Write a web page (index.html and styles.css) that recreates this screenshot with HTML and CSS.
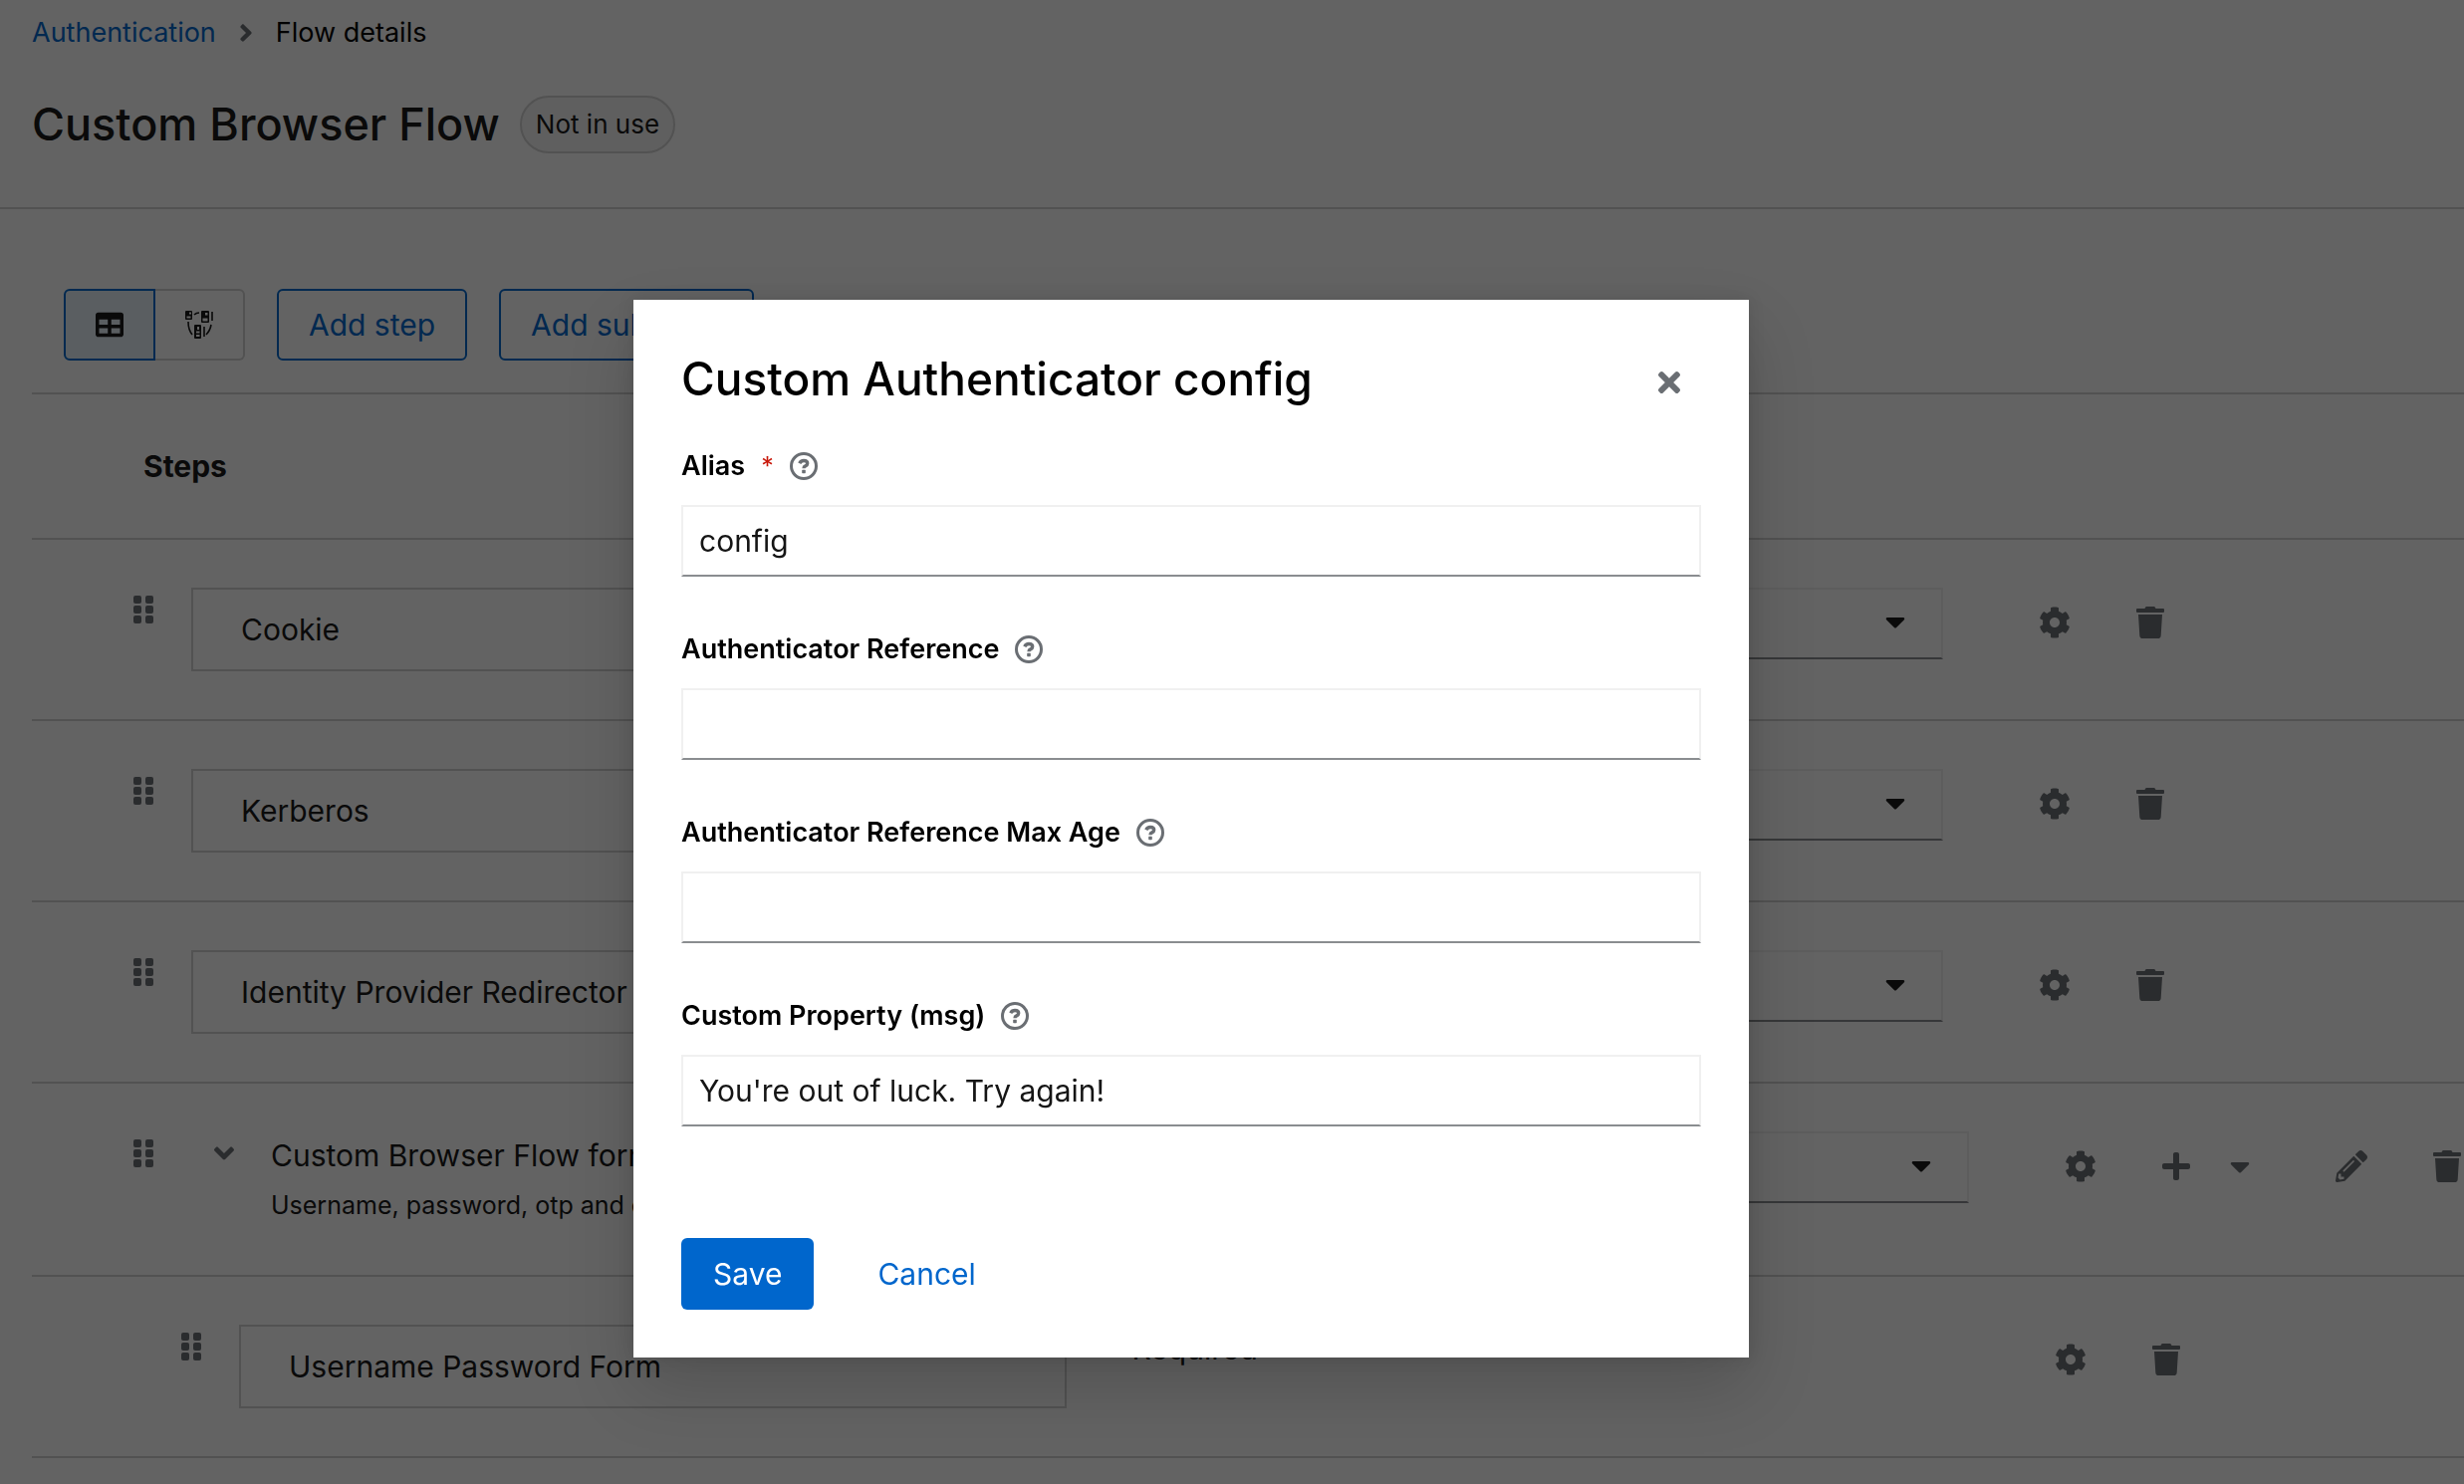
FILE: index.html
```html
<!DOCTYPE html>
<html lang="en">
<head>
<meta charset="utf-8">
<title>Flow details</title>
<link rel="stylesheet" href="styles.css">
</head>
<body>
<svg class="sprite" aria-hidden="true">
  <symbol id="cog" viewBox="0 0 512 512"><path d="M487.4 315.7l-42.6-24.6c4.3-23.2 4.3-47 0-70.2l42.6-24.6c4.9-2.8 7.1-8.6 5.5-14-11.1-35.6-30-67.8-54.7-94.6-3.8-4.1-10-5.1-14.8-2.3L380.8 110c-17.9-15.4-38.5-27.3-60.8-35.1V25.8c0-5.6-3.9-10.5-9.4-11.7-36.7-8.2-74.3-7.8-109.2 0-5.5 1.2-9.4 6.1-9.4 11.7V75c-22.2 7.9-42.8 19.8-60.8 35.1L88.7 85.5c-4.9-2.8-11-1.9-14.8 2.3-24.7 26.7-43.6 58.9-54.7 94.6-1.7 5.4.6 11.2 5.5 14L67.3 221c-4.3 23.2-4.3 47 0 70.2l-42.6 24.6c-4.9 2.8-7.1 8.6-5.5 14 11.1 35.6 30 67.8 54.7 94.6 3.8 4.1 10 5.1 14.8 2.3l42.6-24.6c17.9 15.4 38.5 27.3 60.8 35.1v49.2c0 5.6 3.9 10.5 9.4 11.7 36.7 8.2 74.3 7.8 109.2 0 5.5-1.2 9.4-6.1 9.4-11.7v-49.2c22.2-7.9 42.8-19.8 60.8-35.1l42.6 24.6c4.9 2.8 11 1.9 14.8-2.3 24.7-26.7 43.6-58.9 54.7-94.6 1.5-5.5-.7-11.3-5.6-14.1zM256 336c-44.1 0-80-35.9-80-80s35.9-80 80-80 80 35.9 80 80-35.9 80-80 80z"/></symbol>
  <symbol id="trash" viewBox="0 0 448 512"><path d="M432 32H312l-9.4-18.7A24 24 0 0 0 281.1 0H166.8a23.72 23.72 0 0 0-21.4 13.3L136 32H16A16 16 0 0 0 0 48v32a16 16 0 0 0 16 16h416a16 16 0 0 0 16-16V48a16 16 0 0 0-16-16zM32 128l21.2 339a48 48 0 0 0 47.9 45h245.8a48 48 0 0 0 47.9-45L416 128z"/></symbol>
  <symbol id="plus" viewBox="0 0 448 512"><path d="M416 208H272V64c0-17.67-14.33-32-32-32h-32c-17.67 0-32 14.33-32 32v144H32c-17.67 0-32 14.33-32 32v32c0 17.67 14.33 32 32 32h144v144c0 17.67 14.33 32 32 32h32c17.67 0 32-14.33 32-32V304h144c17.67 0 32-14.33 32-32v-32c0-17.67-14.33-32-32-32z"/></symbol>
  <symbol id="caret" viewBox="0 0 320 512"><path d="M31.3 192h257.3c17.8 0 26.7 21.5 14.1 34.1L174.1 354.8c-7.8 7.8-20.5 7.8-28.3 0L17.2 226.1C4.6 213.5 13.5 192 31.3 192z"/></symbol>
  <symbol id="pencil" viewBox="0 0 512 512"><path fill-rule="evenodd" d="M497.9 142.1l-46.1 46.1c-4.7 4.7-12.3 4.7-17 0l-111-111c-4.7-4.7-4.7-12.3 0-17l46.1-46.1c18.7-18.7 49.1-18.7 67.9 0l60.1 60.1c18.8 18.7 18.8 49.1 0 67.9zM284.2 99.8L21.6 362.4.4 483.9c-2.9 16.4 11.4 30.6 27.8 27.8l121.5-21.3 262.6-262.6c4.7-4.7 4.7-12.3 0-17l-111-111c-4.8-4.7-12.4-4.7-17.1 0zM124.1 339.9c-5.5-5.5-5.5-14.3 0-19.8l154-154c5.5-5.5 14.3-5.5 19.8 0s5.5 14.3 0 19.8l-154 154c-5.5 5.5-14.3 5.5-19.8 0zM88 424h48v36.3l-64.5 11.3-31.1-31.1L51.7 376H88v48z"/></symbol>
  <symbol id="times" viewBox="0 80 352 352"><path d="M242.72 256l100.07-100.07c12.28-12.28 12.28-32.19 0-44.48l-22.24-22.24c-12.28-12.28-32.19-12.28-44.48 0L176 189.28 75.93 89.21c-12.28-12.28-32.19-12.28-44.48 0L9.21 111.45c-12.28 12.28-12.28 32.19 0 44.48L109.28 256 9.21 356.07c-12.28 12.28-12.28 32.19 0 44.48l22.24 22.24c12.28 12.28 32.2 12.28 44.48 0L176 322.72l100.07 100.07c12.28 12.28 32.2 12.28 44.48 0l22.24-22.24c12.28-12.28 12.28-32.19 0-44.48L242.72 256z"/></symbol>
  <symbol id="table" viewBox="0 0 512 512"><path d="M464 32H48C21.49 32 0 53.49 0 80v352c0 26.51 21.49 48 48 48h416c26.51 0 48-21.49 48-48V80c0-26.51-21.49-48-48-48zM224 416H64v-96h160v96zm0-160H64v-96h160v96zm224 160H288v-96h160v96zm0-160H288v-96h160v96z"/></symbol>
  <symbol id="diagram" viewBox="0 0 28 28">
    <path fill-rule="evenodd" d="M1 0h5a1 1 0 0 1 1 1v7a1 1 0 0 1-1 1H1a1 1 0 0 1-1-1V1a1 1 0 0 1 1-1zM4 1.500h2v2H4zM1.500 5.500h4v2h-4zM17 0h6a1 1 0 0 1 1 1v10a1 1 0 0 1-1 1h-6a1 1 0 0 1-1-1V1a1 1 0 0 1 1-1zM20 2h2.500v2.500H20zM17.500 7.500h5v3h-5zM10 14h5a1 1 0 0 1 1 1v12a1 1 0 0 1-1 1h-5a1 1 0 0 1-1-1V15a1 1 0 0 1 1-1zM12 16h2v3h-2zM11 20.500h3.500v2H11zM11 24h3.500v2H11z"/>
    <path fill="none" stroke="currentColor" stroke-width="1.600" d="M27 1v9M19 16v10M9 4q2-2 5-2M3 11q0 8 4 13M26 14q-1 6-5 10"/>
  </symbol>
  <symbol id="grip" viewBox="0 0 20 28"><rect width="8" height="8" rx="2"/><rect x="12" width="8" height="8" rx="2"/><rect y="10" width="8" height="8" rx="2"/><rect x="12" y="10" width="8" height="8" rx="2"/><rect y="20" width="8" height="8" rx="2"/><rect x="12" y="20" width="8" height="8" rx="2"/></symbol>
  <symbol id="angle-right" viewBox="0 0 256 512"><path d="M224.300 273l-136 136c-9.400 9.400-24.600 9.400-33.900 0l-22.600-22.600c-9.400-9.400-9.400-24.600 0-33.900l96.400-96.400-96.400-96.400c-9.400-9.400-9.400-24.600 0-33.900L54.300 103c9.400-9.400 24.600-9.400 33.900 0l136 136c9.500 9.400 9.500 24.600.1 34z"/></symbol>
  <symbol id="angle-down" viewBox="0 0 320 512"><path d="M143 352.300L7 216.300c-9.400-9.400-9.400-24.600 0-33.900l22.600-22.600c9.400-9.400 24.600-9.400 33.900 0l96.400 96.400 96.400-96.400c9.400-9.400 24.600-9.400 33.900 0l22.600 22.600c9.400 9.400 9.400 24.600 0 33.900l-136 136c-9.200 9.400-24.400 9.400-33.800 0z"/></symbol>
  <symbol id="help" viewBox="0 0 28 28"><circle cx="14" cy="14" r="12.500" fill="none" stroke="currentColor" stroke-width="3"/><path fill="none" stroke="currentColor" stroke-width="3.400" d="M9.800 11.200q1.200-2.700 4.200-2.700 3.700 0 3.700 2.800 0 1.700-2 2.600-1.700.8-1.700 2.300"/><rect x="12.200" y="17.800" width="3.600" height="3.400" rx=".6"/></symbol>
</svg>

<div class="page">
  <header class="page-header">
    <nav class="breadcrumb" aria-label="Breadcrumb">
      <a href="#authentication">Authentication</a>
      <svg class="icon-angle"><use href="#angle-right"/></svg>
      <span>Flow details</span>
    </nav>
    <div class="title-row">
      <h1>Custom Browser Flow</h1>
      <span class="label">Not in use</span>
    </div>
  </header>

  <main class="content">
    <div class="toolbar">
      <div class="toggle-group">
        <button class="toggle selected" type="button" aria-label="Table view"><svg class="icon-toggle"><use href="#table"/></svg></button>
        <button class="toggle" type="button" aria-label="Diagram view"><svg class="icon-toggle"><use href="#diagram"/></svg></button>
      </div>
      <button class="btn secondary" type="button">Add step</button>
      <button class="btn secondary" type="button">Add sub-flow</button>
    </div>

    <h2 class="list-head">Steps</h2>
    <ul class="steps">
      <li class="step">
        <svg class="grip"><use href="#grip"/></svg>
        <div class="step-name"><div class="step-box">Cookie</div></div>
        <div class="requirement"><select aria-label="Cookie requirement"><option>Alternative</option><option>Required</option></select><svg class="caret"><use href="#caret"/></svg></div>
        <div class="actions">
          <button class="plain" type="button" aria-label="Settings"><svg class="icon"><use href="#cog"/></svg></button>
          <button class="plain" type="button" aria-label="Delete"><svg class="icon"><use href="#trash"/></svg></button>
        </div>
      </li>
      <li class="step">
        <svg class="grip"><use href="#grip"/></svg>
        <div class="step-name"><div class="step-box">Kerberos</div></div>
        <div class="requirement"><select aria-label="Kerberos requirement"><option>Disabled</option><option>Required</option></select><svg class="caret"><use href="#caret"/></svg></div>
        <div class="actions">
          <button class="plain" type="button" aria-label="Settings"><svg class="icon"><use href="#cog"/></svg></button>
          <button class="plain" type="button" aria-label="Delete"><svg class="icon"><use href="#trash"/></svg></button>
        </div>
      </li>
      <li class="step">
        <svg class="grip"><use href="#grip"/></svg>
        <div class="step-name"><div class="step-box">Identity Provider Redirector</div></div>
        <div class="requirement"><select aria-label="Identity Provider Redirector requirement"><option>Alternative</option><option>Required</option></select><svg class="caret"><use href="#caret"/></svg></div>
        <div class="actions">
          <button class="plain" type="button" aria-label="Settings"><svg class="icon"><use href="#cog"/></svg></button>
          <button class="plain" type="button" aria-label="Delete"><svg class="icon"><use href="#trash"/></svg></button>
        </div>
      </li>
      <li class="step flow">
        <svg class="grip"><use href="#grip"/></svg>
        <button class="expander" type="button" aria-label="Collapse"><svg class="icon-expand"><use href="#angle-down"/></svg></button>
        <div class="flow-title">Custom Browser Flow forms<small>Username, password, otp and other auth forms.</small></div>
        <div class="requirement"><select aria-label="Forms requirement"><option>Alternative</option><option>Required</option></select><svg class="caret"><use href="#caret"/></svg></div>
        <div class="actions">
          <button class="plain" type="button" aria-label="Settings"><svg class="icon"><use href="#cog"/></svg></button>
          <button class="plain" type="button" aria-label="Add"><svg class="icon"><use href="#plus"/></svg></button>
          <button class="plain narrow" type="button" aria-label="More add options"><svg class="icon"><use href="#caret"/></svg></button>
          <button class="plain" type="button" aria-label="Edit"><svg class="icon"><use href="#pencil"/></svg></button>
          <button class="plain" type="button" aria-label="Delete"><svg class="icon"><use href="#trash"/></svg></button>
        </div>
      </li>
      <li class="step nested">
        <svg class="grip"><use href="#grip"/></svg>
        <div class="step-name"><div class="step-box">Username Password Form</div></div>
        <div class="requirement">Required</div>
        <div class="actions">
          <button class="plain" type="button" aria-label="Settings"><svg class="icon"><use href="#cog"/></svg></button>
          <button class="plain" type="button" aria-label="Delete"><svg class="icon"><use href="#trash"/></svg></button>
        </div>
      </li>
    </ul>
  </main>
</div>

<div class="backdrop">
  <form class="modal" role="dialog" aria-labelledby="modal-title">
    <div class="modal-head">
      <h2 id="modal-title">Custom Authenticator config</h2>
      <button class="plain" type="button" aria-label="Close"><svg class="icon-close"><use href="#times"/></svg></button>
    </div>
    <div class="fields">
      <div class="field">
        <div class="field-label"><label for="alias">Alias</label><span class="required">*</span><button class="help" type="button" aria-label="Help for Alias"><svg><use href="#help"/></svg></button></div>
        <input id="alias" type="text" value="config">
      </div>
      <div class="field">
        <div class="field-label"><label for="reference">Authenticator Reference</label><button class="help" type="button" aria-label="Help for Authenticator Reference"><svg><use href="#help"/></svg></button></div>
        <input id="reference" type="text">
      </div>
      <div class="field">
        <div class="field-label"><label for="max-age">Authenticator Reference Max Age</label><button class="help" type="button" aria-label="Help for Max Age"><svg><use href="#help"/></svg></button></div>
        <input id="max-age" type="text">
      </div>
      <div class="field">
        <div class="field-label"><label for="msg">Custom Property (msg)</label><button class="help" type="button" aria-label="Help for Custom Property"><svg><use href="#help"/></svg></button></div>
        <input id="msg" type="text" value="You're out of luck. Try again!">
      </div>
    </div>
    <div class="modal-foot">
      <button class="btn primary" type="button">Save</button>
      <button class="btn link" type="button">Cancel</button>
    </div>
  </form>
</div>
</body>
</html>
```
FILE: styles.css
```css
* { box-sizing: border-box; }

body {
  margin: 0;
  overflow: hidden;
  background: #fff;
  color: #151515;
  font-family: Inter, "Liberation Sans", sans-serif;
  font-size: 30px;
  line-height: 48px;
}

h1, h2 { margin: 0; }
button, input, select { font: inherit; color: inherit; }
button { padding: 0; border: 0; background: none; }
svg { display: block; flex: none; fill: currentColor; }
.sprite { position: absolute; width: 0; height: 0; }

.page-header {
  padding: 12px 32px 52px;
  border-bottom: 2px solid #d2d2d2;
}

.breadcrumb {
  display: flex;
  align-items: center;
  gap: 20px;
  font-size: 27px;
  line-height: 42px;
  color: #000;
}

.breadcrumb a { color: #06c; text-decoration: none; }
.icon-angle { width: 20px; height: 28px; color: #6a6e73; }
.icon-expand { width: 24px; height: 32px; color: #6a6e73; }

.title-row {
  display: flex;
  align-items: center;
  gap: 20px;
  padding-top: 40px;
}

.title-row h1 { font-size: 45px; font-weight: 500; line-height: 62px; }

.label {
  padding: 0 14px;
  border: 2px solid #d2d2d2;
  border-radius: 30px;
  background: #f5f5f5;
  font-size: 26px;
  line-height: 54px;
}

.content { padding: 80px 0 0 32px; }

.toolbar {
  display: flex;
  gap: 32px;
  padding: 0 32px 32px;
  border-bottom: 2px solid #d2d2d2;
}

.toggle-group { display: flex; }

.toggle {
  display: grid;
  place-items: center;
  width: 90px;
  height: 72px;
  border: 2px solid #d2d2d2;
  border-left: 0;
  border-radius: 0 6px 6px 0;
}

.toggle.selected {
  width: 92px;
  border: 2px solid #06c;
  border-radius: 6px 0 0 6px;
  background: #e7f1fa;
}

.icon-toggle { width: 28px; height: 28px; }

.btn {
  height: 72px;
  padding: 0 32px;
  border-radius: 6px;
  line-height: 48px;
}

.btn.secondary { border: 2px solid #06c; padding: 0 30px; color: #06c; }
.btn.primary { background: #06c; color: #fff; }
.btn.link { color: #06c; }

.list-head {
  padding: 48px 112px;
  border-bottom: 2px solid #d2d2d2;
  font-size: 30px;
  font-weight: 700;
}

.steps { margin: 0; padding: 0; list-style: none; }

.step {
  display: flex;
  align-items: flex-start;
  padding: 48px 0 48px 102px;
  border-bottom: 2px solid #d2d2d2;
}

.step.nested { padding-left: 150px; }

.grip { width: 20px; height: 28px; margin-top: 8px; color: #6a6e73; }

.step-name { flex: 1; margin: 0 66px 0 38px; }
.step-box { padding: 16px 48px; border: 2px solid #d2d2d2; }

.expander { margin: 6px 35px 0 59px; }

.flow-title { flex: 1; margin-right: 66px; }
.flow-title small { display: block; padding-top: 4px; font-size: 25px; line-height: 44px; }

.requirement { position: relative; flex: 1; }

.requirement select {
  display: block;
  width: 100%;
  height: 72px;
  padding: 0 16px;
  border: 2px solid #f0f0f0;
  border-bottom-color: #8a8d90;
  border-radius: 0;
  background: #fff;
  appearance: none;
}

.caret {
  position: absolute;
  top: 18px;
  right: 38px;
  width: 20px;
  height: 32px;
  pointer-events: none;
}

.actions { display: flex; flex: none; width: 523px; padding-left: 64px; }
.flow .actions { width: 497px; }
.nested .actions { width: 507px; }

.plain {
  display: grid;
  flex: none;
  place-items: center;
  width: 96px;
  height: 70px;
  color: #6a6e73;
}

.plain.narrow { width: 32px; margin-right: 48px; }
.icon { width: 32px; height: 32px; }
.narrow .icon { width: 20px; }

.backdrop {
  position: fixed;
  inset: 0;
  display: flex;
  align-items: flex-start;
  justify-content: center;
  padding: 301px 82px 0 0;
  background: rgba(3, 3, 3, .62);
}

.modal {
  width: 1120px;
  max-width: 100%;
  padding: 48px;
  background: #fff;
  color: #000;
  box-shadow: 0 32px 64px rgba(3, 3, 3, .16), 0 0 16px rgba(3, 3, 3, .1);
}

.modal-head { display: flex; align-items: flex-start; justify-content: space-between; height: 62px; }
.modal-head h2 { font-size: 46px; font-weight: 500; line-height: 62px; }
.modal-head .plain { width: 64px; }
.icon-close { width: 22px; height: 22px; }

.fields { display: grid; gap: 52px; padding: 36px 0 112px; }

.field-label {
  display: flex;
  align-items: center;
  gap: 16px;
  padding-bottom: 18px;
  font-size: 27px;
  line-height: 42px;
}

.field-label label { font-weight: 600; }
.required { color: #c9190b; font-size: 25px; }
.help { color: #6a6e73; }
.help svg { width: 28px; height: 28px; }

.field input {
  display: block;
  width: 100%;
  height: 72px;
  padding: 0 16px;
  border: 2px solid #f0f0f0;
  border-bottom-color: #8a8d90;
  border-radius: 0;
  background: #fff;
  color: #151515;
}

.modal-foot { display: flex; gap: 32px; }
```
